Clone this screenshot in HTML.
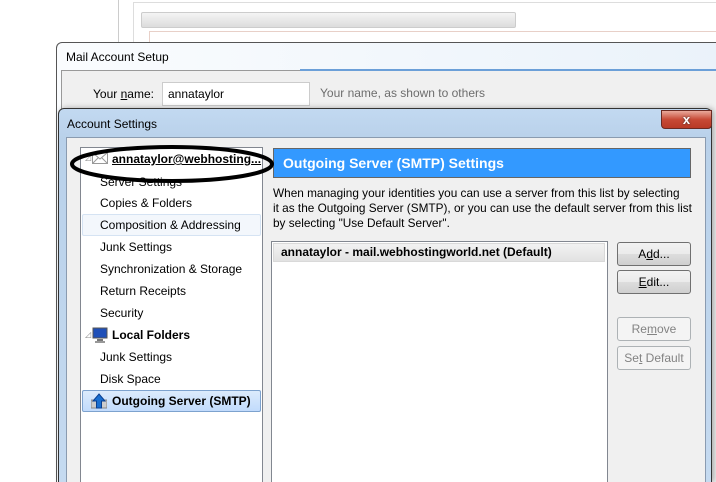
<!DOCTYPE html>
<html style="overflow:hidden;width:716px;height:482px"><head><meta charset="utf-8"><style>
*{margin:0;padding:0;box-sizing:border-box}
body{width:716px;height:482px;overflow:hidden;background:#fff;position:relative;font-family:"Liberation Sans",sans-serif;font-size:12px;color:#000}
.a{position:absolute}
.t{white-space:nowrap}
</style></head><body>
<div class="a" style="left:118px;top:0;width:1px;height:44px;background:#ccc"></div>
<div class="a" style="left:133px;top:2px;width:600px;height:60px;border:1px solid #ddd"></div>
<div class="a" style="left:141px;top:12px;width:375px;height:16px;background:linear-gradient(#f4f4f4,#dcdcdc);border:1px solid #ccc;border-radius:2px"></div>
<div class="a" style="left:149px;top:31px;width:600px;height:40px;border:1px solid #e8d0c8;background:#fff"></div>

<div class="a" style="left:56px;top:42px;width:680px;height:440px;border:1px solid #555;border-bottom:none;border-radius:6px 0 0 0;background:linear-gradient(90deg,#fafcfe,#eaf2fa)"></div>
<div class="a t" style="left:66px;top:50px;font-size:12px">Mail Account Setup</div>
<div class="a" style="left:61px;top:70px;width:660px;height:412px;background:#f0f0f0;border:1px solid #999;border-bottom:none"></div>
<div class="a" style="left:300px;top:69px;width:420px;height:2px;background:#6b9fd8"></div>
<div class="a t" style="left:93px;top:87px">Your <u>n</u>ame:</div>
<div class="a" style="left:162px;top:82px;width:148px;height:24px;background:#fff;border:1px solid #ccc"></div>
<div class="a t" style="left:168px;top:87px">annataylor</div>
<div class="a t" style="left:320px;top:86px;color:#6d6d6d">Your name, as shown to others</div>

<div class="a" style="left:58px;top:108px;width:654px;height:374px;border:1px solid #333;border-bottom:none;border-radius:6px 6px 0 0;background:linear-gradient(#c2d9f1,#b9d1ea 30px,#c5daf0);box-shadow:2px 0 6px rgba(0,0,0,.3)"></div>
<div class="a t" style="left:67px;top:117px">Account Settings</div>
<div class="a" style="left:661px;top:110px;width:51px;height:19px;border:1px solid #6b2a22;border-radius:0 0 4px 4px;background:linear-gradient(#e9a99b,#c74a36 50%,#b93a26);color:#fff;font-weight:bold;text-align:center;font-size:13px;line-height:17px;text-shadow:0 0 2px #333">x</div>
<div class="a" style="left:66px;top:137px;width:640px;height:345px;background:#f0f0f0;border:1px solid #8a9bb0;border-bottom:none"></div>

<div class="a" style="left:80px;top:147px;width:183px;height:335px;background:#fff;border:1px solid #828790;border-bottom:none"></div>
<div class="a" style="left:82px;top:214px;width:179px;height:22px;background:#f3f7fc;border:1px solid #d5e3f3;border-radius:2px"></div>
<div class="a" style="left:82px;top:390px;width:179px;height:22px;background:linear-gradient(#dcebfc,#c1dbfc);border:1px solid #7da2ce;border-radius:2px"></div>
<div class="a t" style="left:85px;top:153px;color:#888;font-size:8px">◿</div>
<svg class="a" style="left:92px;top:152px" width="16" height="12"><rect x="0.5" y="0.5" width="15" height="11" fill="#fff" stroke="#999"/><path d="M1 1L8 7L15 1M1 11L6 6M15 11L10 6" stroke="#999" fill="none"/></svg>
<div class="a t" style="left:112px;top:152px;font-weight:bold;text-decoration:underline">annataylor@webhosting...</div>
<div class="a t" style="left:100px;top:175px">Server Settings</div>
<div class="a t" style="left:100px;top:196px">Copies &amp; Folders</div>
<div class="a t" style="left:100px;top:218px">Composition &amp; Addressing</div>
<div class="a t" style="left:100px;top:240px">Junk Settings</div>
<div class="a t" style="left:100px;top:262px">Synchronization &amp; Storage</div>
<div class="a t" style="left:100px;top:284px">Return Receipts</div>
<div class="a t" style="left:100px;top:306px">Security</div>
<div class="a t" style="left:85px;top:330px;color:#888;font-size:8px">◿</div>
<svg class="a" style="left:92px;top:327px" width="16" height="16"><rect x="1" y="1" width="14" height="10" fill="#1f4fb8" stroke="#555"/><rect x="5" y="12" width="6" height="2" fill="#777"/><rect x="3" y="14" width="10" height="2" fill="#999"/></svg>
<div class="a t" style="left:112px;top:328px;font-weight:bold">Local Folders</div>
<div class="a t" style="left:100px;top:350px">Junk Settings</div>
<div class="a t" style="left:100px;top:372px">Disk Space</div>
<svg class="a" style="left:91px;top:393px" width="16" height="16"><rect x="0" y="7" width="16" height="8" fill="#ccc" stroke="#888"/><path d="M8 1L14 8H10.5V15H5.5V8H2Z" fill="#1a6fd0" stroke="#0a3f90"/></svg>
<div class="a t" style="left:112px;top:394px;font-weight:bold">Outgoing Server (SMTP)</div>

<div class="a" style="left:273px;top:148px;width:418px;height:30px;background:#3399ff;border:1px solid #666"></div>
<div class="a t" style="left:283px;top:155px;color:#fff;font-weight:bold;font-size:14px">Outgoing Server (SMTP) Settings</div>
<svg class="a" style="left:68px;top:142px" width="214" height="46"><ellipse cx="104" cy="22" rx="100" ry="17" fill="none" stroke="#000" stroke-width="4"/></svg>
<div class="a" style="left:273px;top:186px;line-height:15px;width:430px;font-size:11.8px">When managing your identities you can use a server from this list by selecting<br>it as the Outgoing Server (SMTP), or you can use the default server from this list<br>by selecting "Use Default Server".</div>
<div class="a" style="left:271px;top:241px;width:337px;height:241px;background:#fff;border:1px solid #828790;border-bottom:none"></div>
<div class="a" style="left:273px;top:243px;width:332px;height:19px;background:linear-gradient(#f2f2f2,#e2e2e2);border:1px solid #d9d9d9"></div>
<div class="a t" style="left:281px;top:245px;font-weight:bold">annataylor - mail.webhostingworld.net (Default)</div>
<div class="a" style="left:617px;top:242px;width:74px;height:24px;border:1px solid #707070;border-radius:3px;background:linear-gradient(#f2f2f2,#ebebeb 50%,#dddddd 51%,#cfcfcf);text-align:center;line-height:22px">A<u>d</u>d...</div>
<div class="a" style="left:617px;top:270px;width:74px;height:24px;border:1px solid #707070;border-radius:3px;background:linear-gradient(#f2f2f2,#ebebeb 50%,#dddddd 51%,#cfcfcf);text-align:center;line-height:22px"><u>E</u>dit...</div>
<div class="a" style="left:617px;top:317px;width:74px;height:24px;border:1px solid #adb2b5;border-radius:3px;background:#f4f4f4;text-align:center;line-height:22px;color:#838383">Re<u>m</u>ove</div>
<div class="a" style="left:617px;top:346px;width:74px;height:24px;border:1px solid #adb2b5;border-radius:3px;background:#f4f4f4;text-align:center;line-height:22px;color:#838383">Se<u>t</u> Default</div>
</body></html>
